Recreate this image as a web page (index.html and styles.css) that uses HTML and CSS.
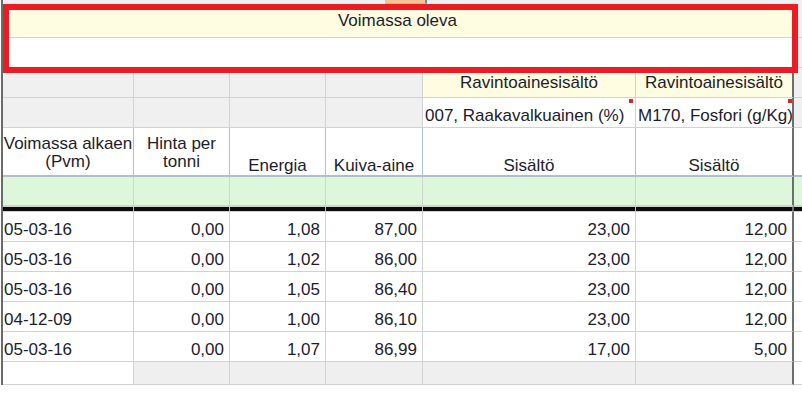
FILE: index.html
```html
<!DOCTYPE html>
<html lang="fi">
<head>
<meta charset="utf-8">
<title>Rehun ravintoainesisältö</title>
<link rel="stylesheet" href="styles.css">
</head>
<body>
<div class="window">
  <div class="toolstrip"><span class="tool-btn"></span></div>

  <div class="grid">
    <!-- group caption and filter band -->
    <div class="cell band caption">Voimassa oleva</div>
    <div class="cell side"></div>
    <div class="cell band filter"></div>
    <div class="cell side"></div>

    <!-- column group row -->
    <div class="cell plain"></div>
    <div class="cell plain"></div>
    <div class="cell plain"></div>
    <div class="cell plain"></div>
    <div class="cell group">Ravintoainesisältö</div>
    <div class="cell group edge">Ravintoainesisältö</div>
    <div class="cell side"></div>

    <!-- nutrient row -->
    <div class="cell plain"></div>
    <div class="cell plain"></div>
    <div class="cell plain"></div>
    <div class="cell plain"></div>
    <div class="cell nutrient">007, Raakavalkuainen (%)<span class="flag"></span></div>
    <div class="cell nutrient edge">M170, Fosfori (g/Kg)<span class="flag"></span></div>
    <div class="cell side"></div>

    <!-- column headers -->
    <div class="cell head wrap"><span>Voimassa alkaen</span><span>(Pvm)</span></div>
    <div class="cell head wrap"><span>Hinta per</span><span>tonni</span></div>
    <div class="cell head">Energia</div>
    <div class="cell head">Kuiva-aine</div>
    <div class="cell head">Sisältö</div>
    <div class="cell head edge">Sisältö</div>
    <div class="cell head last"></div>

    <!-- new row entry -->
    <div class="cell entry"></div>
    <div class="cell entry"></div>
    <div class="cell entry"></div>
    <div class="cell entry"></div>
    <div class="cell entry"></div>
    <div class="cell entry edge"></div>
    <div class="cell entry last"></div>

    <!-- separator -->
    <div class="cell rule"></div>
    <div class="cell rule"></div>
    <div class="cell rule"></div>
    <div class="cell rule"></div>
    <div class="cell rule"></div>
    <div class="cell rule edge"></div>
    <div class="cell rule last"></div>

    <!-- data -->
    <div class="cell date">05-03-16</div>
    <div class="cell num">0,00</div>
    <div class="cell num">1,08</div>
    <div class="cell num">87,00</div>
    <div class="cell num">23,00</div>
    <div class="cell num edge">12,00</div>
    <div class="cell side white"></div>

    <div class="cell date">05-03-16</div>
    <div class="cell num">0,00</div>
    <div class="cell num">1,02</div>
    <div class="cell num">86,00</div>
    <div class="cell num">23,00</div>
    <div class="cell num edge">12,00</div>
    <div class="cell side white"></div>

    <div class="cell date">05-03-16</div>
    <div class="cell num">0,00</div>
    <div class="cell num">1,05</div>
    <div class="cell num">86,40</div>
    <div class="cell num">23,00</div>
    <div class="cell num edge">12,00</div>
    <div class="cell side white"></div>

    <div class="cell date">04-12-09</div>
    <div class="cell num">0,00</div>
    <div class="cell num">1,00</div>
    <div class="cell num">86,10</div>
    <div class="cell num">23,00</div>
    <div class="cell num edge">12,00</div>
    <div class="cell side white"></div>

    <div class="cell date">05-03-16</div>
    <div class="cell num">0,00</div>
    <div class="cell num">1,07</div>
    <div class="cell num">86,99</div>
    <div class="cell num">17,00</div>
    <div class="cell num edge">5,00</div>
    <div class="cell side white"></div>

    <!-- empty trailing row -->
    <div class="cell blank first"></div>
    <div class="cell blank"></div>
    <div class="cell blank"></div>
    <div class="cell blank"></div>
    <div class="cell blank"></div>
    <div class="cell blank edge"></div>
    <div class="cell side white"></div>
  </div>

  <div class="highlight"></div>
</div>
</body>
</html>
```

FILE: styles.css
```css
html, body {
  margin: 0;
  padding: 0;
  background: #ffffff;
}

body {
  width: 802px;
  height: 394px;
  overflow: hidden;
  font-family: "Liberation Sans", Arial, sans-serif;
  font-size: 17px;
  color: #1c1c2c;
}

.window {
  position: relative;
  margin-left: 1px;
  border-left: 2px solid #6b6b6b;
  width: 799px;
}

/* strip of the toolbar above the grid */
.toolstrip {
  height: 4px;
  background: #f0f0f0;
  display: flex;
}

.tool-btn {
  margin-left: 382px;
  width: 40px;
  height: 3px;
  background: #f4c396;
  border-right: 2px solid #4f8fd6;
  border-bottom: 1px solid #9cc0e8;
}

.grid {
  display: grid;
  grid-template-columns: 131px 96px 96px 97px 213px 158px 1fr;
  grid-template-rows: 34px 30px 30px 30px 49px 29px 6px repeat(5, 30px) 23px;
}

.cell {
  box-sizing: border-box;
  border-right: 1px solid #d2d2d2;
  border-bottom: 1px solid #d2d2d2;
  white-space: nowrap;
  overflow: hidden;
  line-height: 17px;
  position: relative;
}

/* right edge of the last visible column */
.cell.edge {
  border-right: 2px solid #6e6e6e;
}

.side {
  background: #f0f0f0;
  border-right: none;
}

.side.white {
  background: #ffffff;
}

.band {
  grid-column: span 6;
  border-right: 2px solid #6e6e6e;
}

.caption {
  background: #fefde2;
  text-align: center;
  padding-top: 8px;
}

.filter {
  background: #ffffff;
}

.plain {
  background: #f0f0f0;
}

.group {
  background: #fefde2;
  text-align: center;
  padding-top: 6px;
}

.nutrient {
  background: #ffffff;
  padding: 9px 0 0 2px;
}

.flag {
  position: absolute;
  top: 1px;
  right: 2px;
  width: 4px;
  height: 4px;
  background: #ee1c24;
}

.nutrient.edge .flag {
  right: 0;
}

.head {
  background: #ffffff;
  border-right-color: #abc0da;
  border-bottom: 2px solid #b3bdcb;
  display: flex;
  flex-direction: column;
  justify-content: flex-end;
  align-items: center;
  text-align: center;
  padding-bottom: 1px;
}

.head.wrap {
  line-height: 18px;
  padding-bottom: 4px;
}

.head.edge {
  border-right: 2px solid #6e6e6e;
}

.head.last {
  border-right: none;
}

.entry {
  background: #dcf7da;
}

.entry.last {
  border-right: none;
}

.rule {
  background: #0a0a0a;
  border-right-color: #bfbfbf;
  border-top: 1px solid #d2d2d2;
  border-bottom: 1px solid #d2d2d2;
}

.rule.edge {
  border-right: 2px solid #6e6e6e;
}

.rule.last {
  border-right: none;
}

.date {
  padding: 9px 0 0 1px;
}

.num {
  text-align: right;
  padding: 9px 5px 0 0;
}

.blank {
  background: #efefef;
}

.blank.first {
  background: #ffffff;
}

/* annotation frame drawn over the caption band */
.highlight {
  position: absolute;
  left: 0;
  top: 4px;
  width: 795px;
  height: 69px;
  box-sizing: border-box;
  border: 6px solid #ed1c24;
  pointer-events: none;
}
```
